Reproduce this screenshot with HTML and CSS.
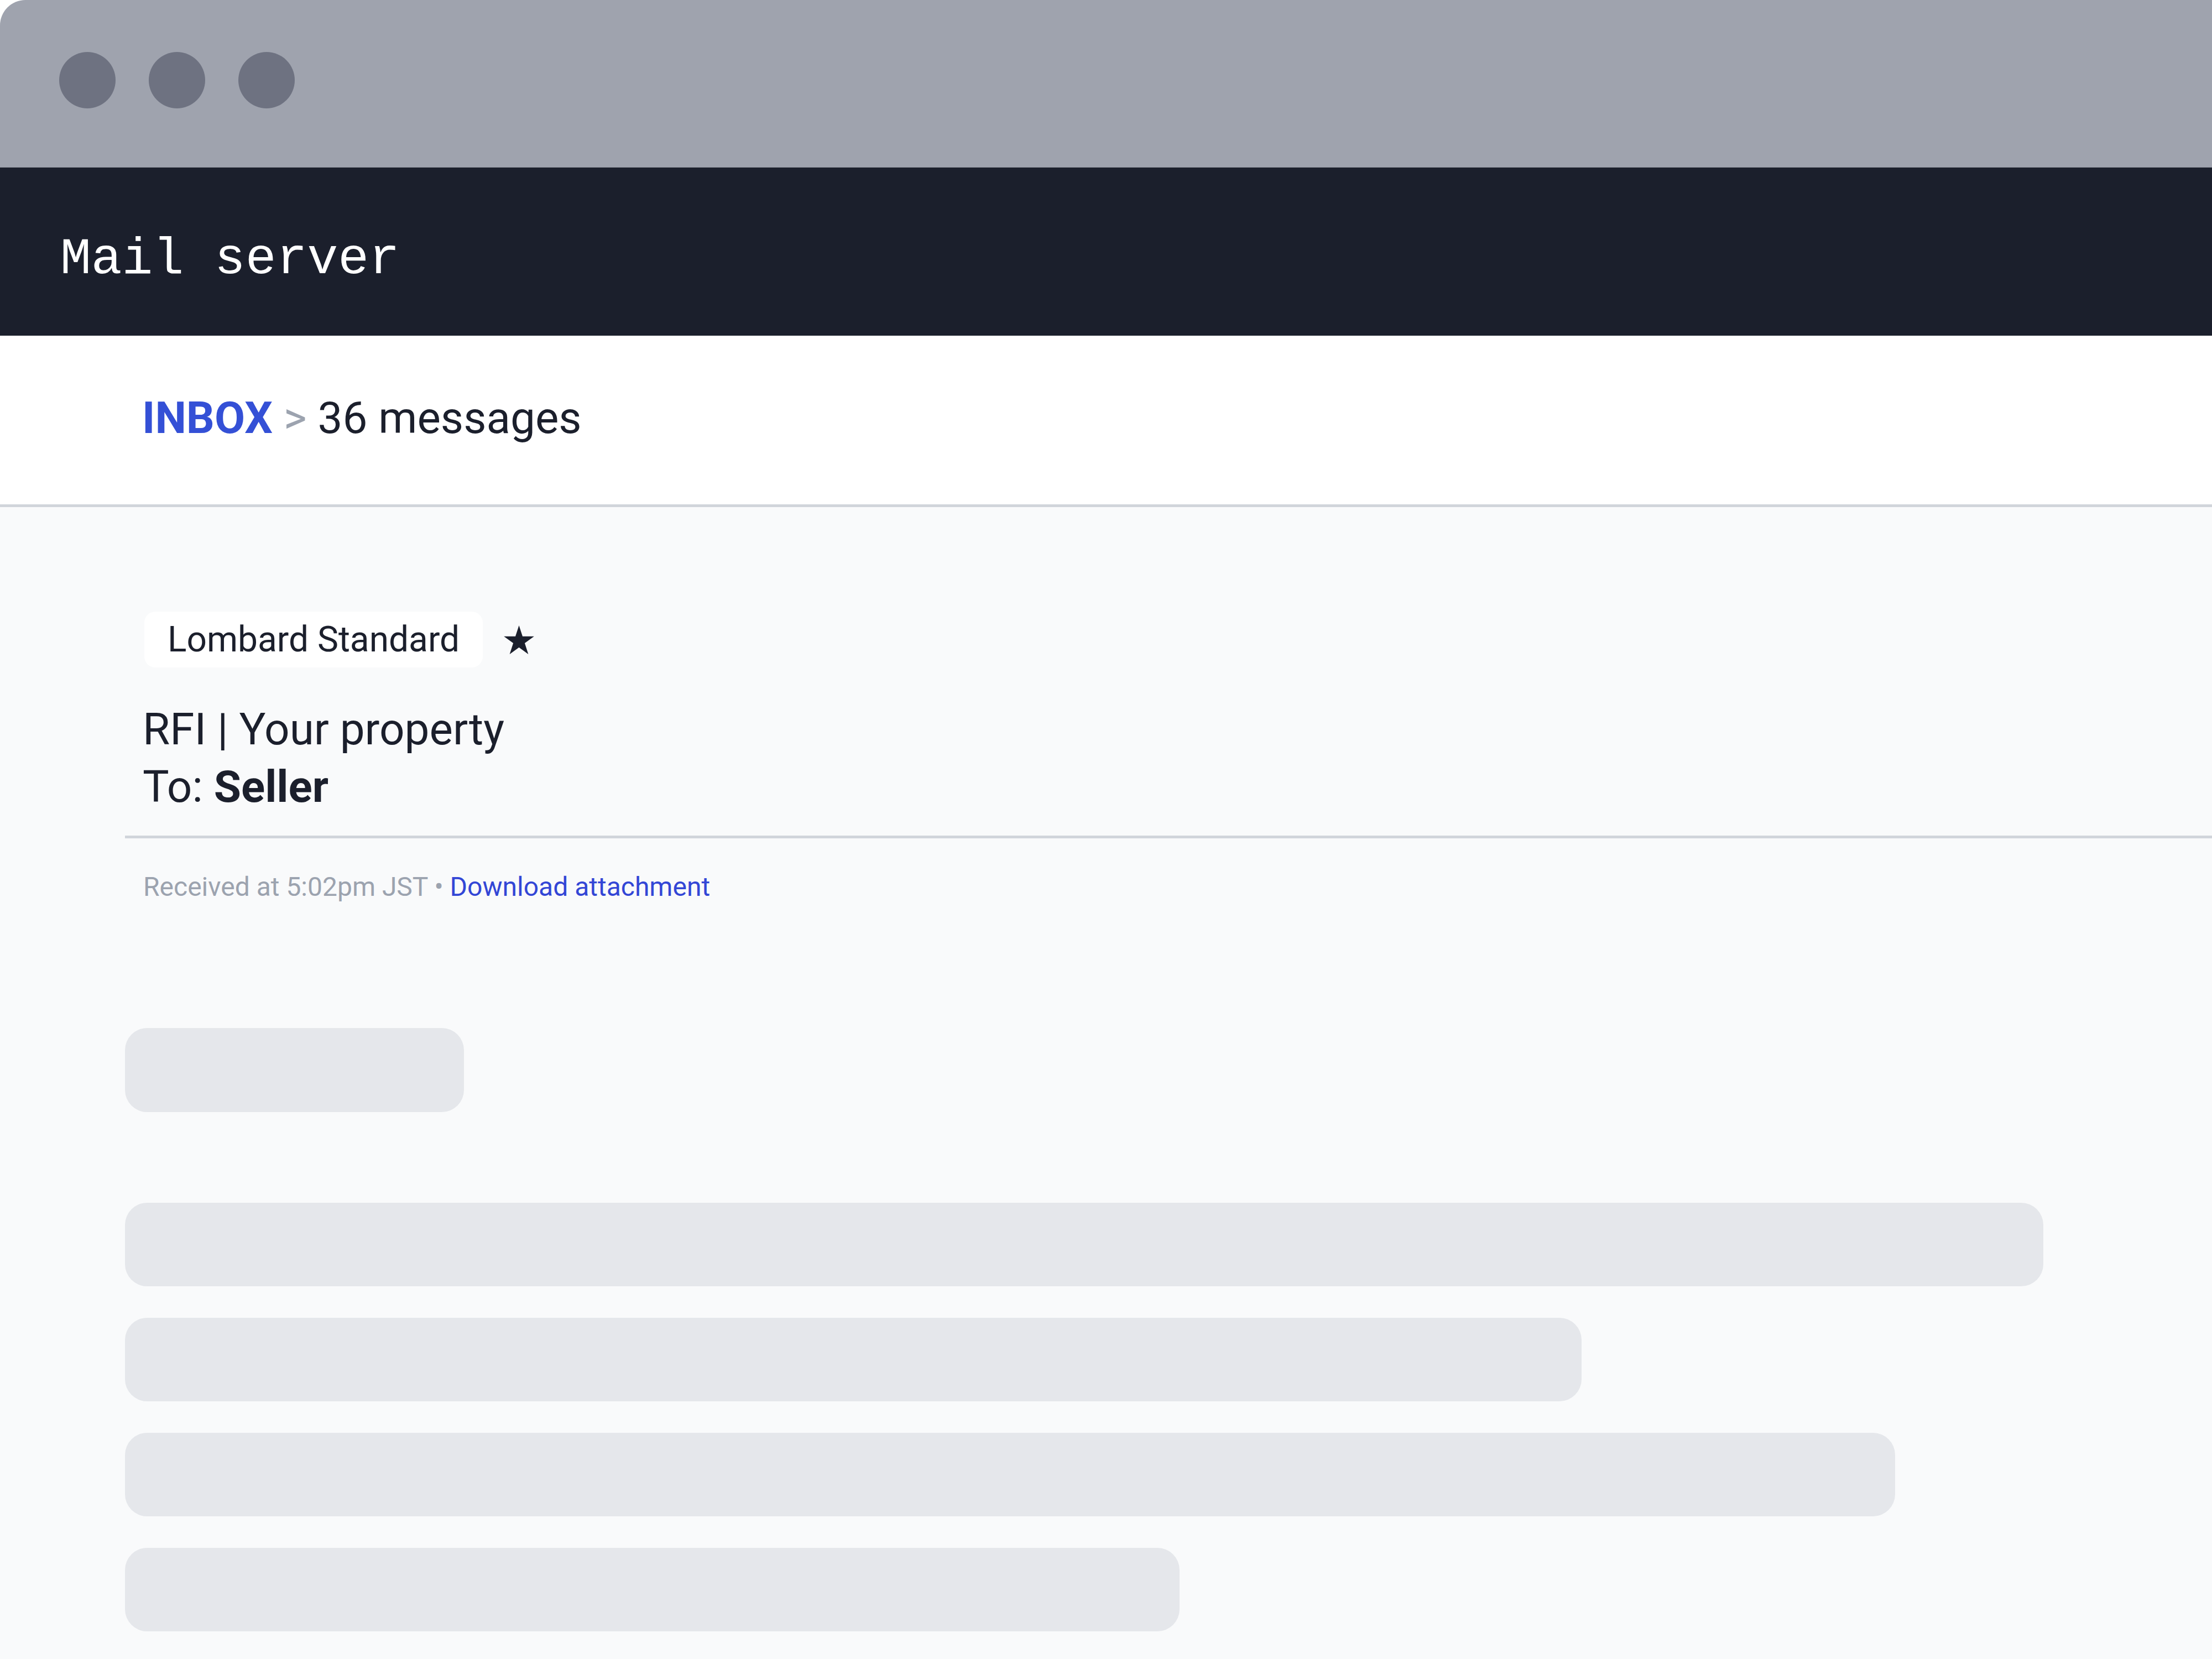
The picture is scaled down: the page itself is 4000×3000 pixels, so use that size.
FILE: index.html
```html
<!DOCTYPE html>
<html lang="en">
<head>
<meta charset="utf-8">
<title>Mail server</title>
<link rel="stylesheet" href="styles.css">
</head>
<body>
<div class="window">
  <div class="titlebar">
    <span class="dot"></span>
    <span class="dot"></span>
    <span class="dot"></span>
  </div>
  <header class="appbar">Mail server</header>
  <nav class="breadcrumb">
    <span class="crumb-root">INBOX</span>
    <span class="crumb-sep">&gt;</span>
    <span class="crumb-count">36 messages</span>
  </nav>
  <main class="content">
    <div class="meta">
      <div class="sender-row">
        <span class="badge">Lombard Standard</span>
        <svg class="star" viewBox="0 0 55 52" width="55" height="52" aria-hidden="true">
          <polygon points="27.5,0 33.94,19.83 54.8,19.83 37.92,32.09 44.37,51.92 27.5,39.66 10.63,51.92 17.08,32.09 0.2,19.83 21.06,19.83" fill="#1b1f2c"/>
        </svg>
      </div>
      <div class="subject">
        <div>RFI | Your property</div>
        <div>To: <strong>Seller</strong></div>
      </div>
    </div>
    <div class="divider"></div>
    <p class="received">Received at 5:02pm JST &bull; <a class="attach" href="#">Download attachment</a></p>
    <div class="skeleton sk-title"></div>
    <div class="sk-lines">
      <div class="skeleton" style="width:3469px"></div>
      <div class="skeleton" style="width:2634px"></div>
      <div class="skeleton" style="width:3201px"></div>
      <div class="skeleton" style="width:1907px"></div>
    </div>
  </main>
</div>
</body>
</html>
```

FILE: styles.css
```css
html, body {
  margin: 0;
  padding: 0;
  background: #ffffff;
}

body {
  font-family: Roboto, "Liberation Sans", Arial, sans-serif;
  color: #1b1f2c;
}

.window {
  width: 4000px;
  min-height: 3000px;
  display: flex;
  flex-direction: column;
  border-top-left-radius: 46px;
  overflow: hidden;
  background: #f9fafb;
}

.titlebar {
  box-sizing: border-box;
  height: 303px;
  background: #9fa3ae;
  display: flex;
  align-items: flex-start;
  gap: 60px;
  padding: 94px 0 0 107px;
  border-bottom: 1px solid #8d919c;
}

.dot {
  width: 102px;
  height: 102px;
  border-radius: 50%;
  background: #6e7281;
}

.appbar {
  box-sizing: border-box;
  height: 304px;
  background: #1b1f2c;
  color: #ffffff;
  font-family: "Liberation Mono", "DejaVu Sans Mono", monospace;
  font-size: 93px;
  line-height: 109px;
  padding: 112px 0 0 109px;
  white-space: pre;
}

.breadcrumb {
  box-sizing: border-box;
  height: 310px;
  background: #ffffff;
  border-bottom: 5px solid #d1d5db;
  padding: 97px 0 0 257px;
  font-size: 80px;
  line-height: 104px;
}

.crumb-root {
  color: #3450d6;
  font-weight: 700;
}

.crumb-sep {
  color: #9ca3af;
}

.crumb-count {
  color: #1b1f2c;
}

.content {
  flex: 1;
  background: #f9fafb;
  padding: 189px 0 0 226px;
}

.meta {
  padding-left: 32px;
}

.sender-row {
  display: flex;
  align-items: center;
  gap: 38px;
  padding-left: 3px;
}

.badge {
  box-sizing: border-box;
  height: 101px;
  display: inline-flex;
  align-items: center;
  padding: 0 42px;
  background: #ffffff;
  border-radius: 20px;
  font-size: 64px;
  line-height: 101px;
  color: #1b1f2c;
}

.star {
  display: block;
  flex: none;
}

.subject {
  margin-top: 60px;
  font-size: 80px;
  line-height: 104px;
  color: #1b1f2c;
}

.subject strong {
  font-weight: 700;
}

.divider {
  margin-top: 36px;
  height: 5px;
  background: #d1d5db;
}

.received {
  margin: 52px 0 0 0;
  padding-left: 33px;
  font-size: 48px;
  line-height: 72px;
  color: #9ca3af;
}

.attach {
  color: #3346d6;
  text-decoration: none;
}

.skeleton {
  height: 151px;
  background: #e5e7eb;
  border-radius: 40px;
}

.sk-title {
  margin-top: 219px;
  width: 613px;
  height: 152px;
}

.sk-lines {
  margin-top: 164px;
  display: flex;
  flex-direction: column;
  gap: 57px;
}
```
